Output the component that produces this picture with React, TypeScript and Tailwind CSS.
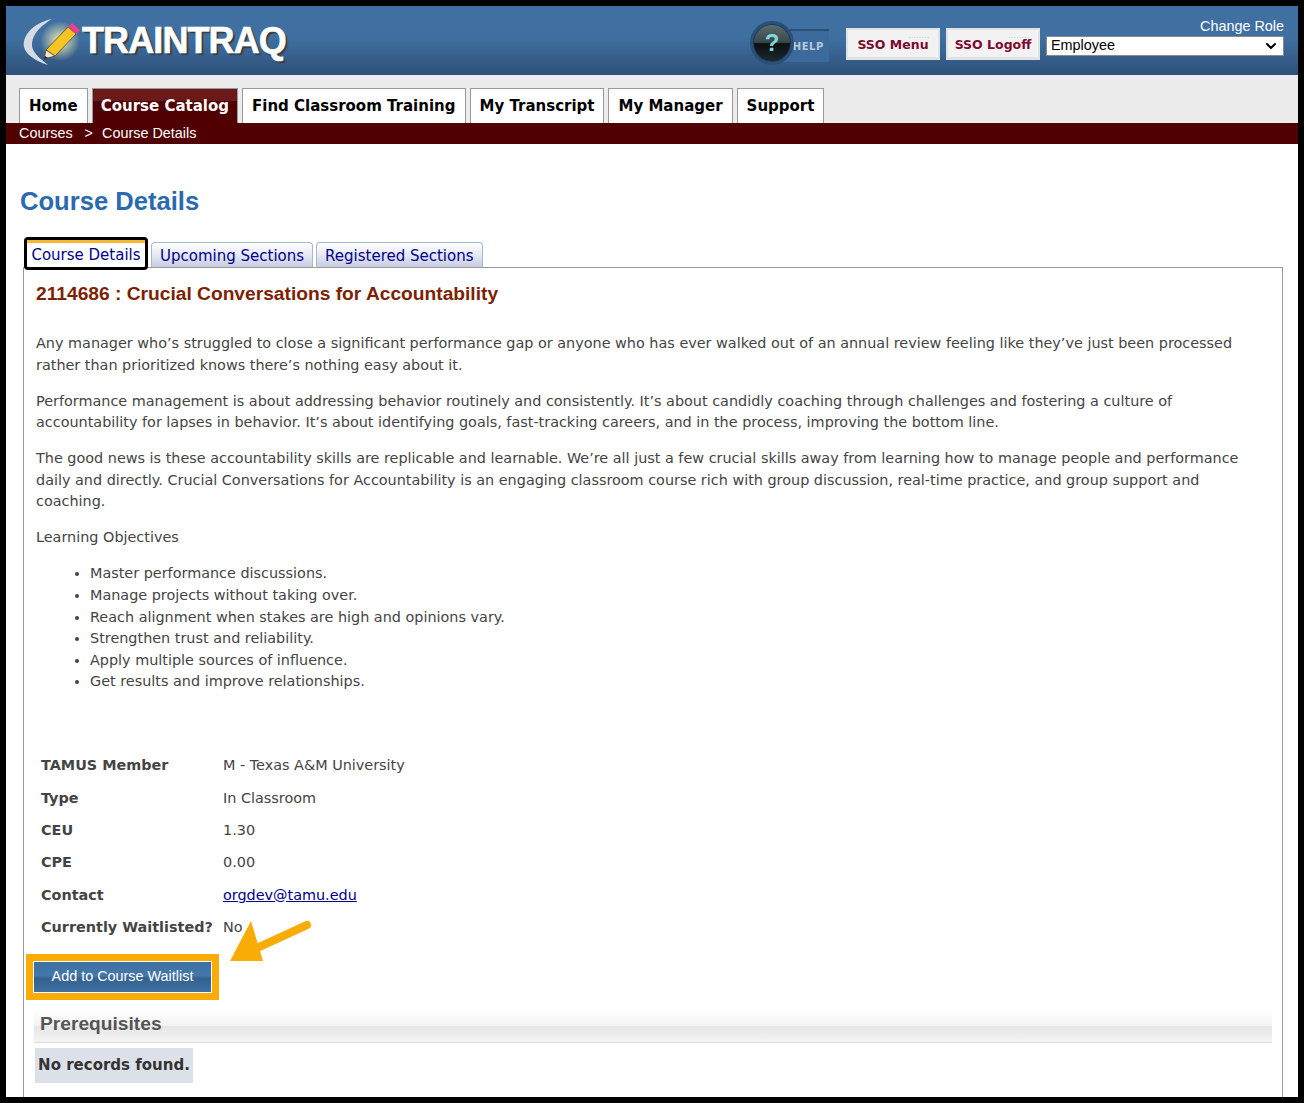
import React from 'react';
import { ChevronDown } from 'lucide-react';

const navItems = ['Home', 'Course Catalog', 'Find Classroom Training', 'My Transcript', 'My Manager', 'Support'];

const details = [
    { label: 'TAMUS Member', value: 'M - Texas A&M University' },
    { label: 'Type', value: 'In Classroom' },
    { label: 'CEU', value: '1.30' },
    { label: 'CPE', value: '0.00' },
    { label: 'Contact', value: 'orgdev@tamu.edu', link: true },
    { label: 'Currently Waitlisted?', value: 'No' },
];

const objectives = [
    'Master performance discussions.',
    'Manage projects without taking over.',
    'Reach alignment when stakes are high and opinions vary.',
    'Strengthen trust and reliability.',
    'Apply multiple sources of influence.',
    'Get results and improve relationships.',
];

function Logo() {
    return (
        <div className="flex items-center h-full pl-[16px]">
            <svg width="62" height="56" viewBox="0 0 62 56" className="shrink-0 -mr-[2px]">
                <defs>
                    <radialGradient id="glow">
                        <stop offset="0%" stopColor="#fdf6b0" stopOpacity="0.95" />
                        <stop offset="100%" stopColor="#fdf6b0" stopOpacity="0" />
                    </radialGradient>
                </defs>
                <path d="M30 6 C10 10 0 24 2 34 C4 42 14 48 26 52 C16 44 9 38 10 30 C11 20 20 12 30 6 Z" fill="#d5dbe2" />
                <circle cx="38" cy="28" r="20" fill="url(#glow)" />
                <path d="M46 14 L54 21 L33 43 L24 37 Z" fill="#f6c522" stroke="#3a3a3a" strokeWidth="0.7" />
                <path d="M46 14 L50 10 L58 17 L54 21 Z" fill="#ec3f8c" />
                <path d="M24 37 L22 46 L33 43 Z" fill="#f3e3c2" stroke="#3a3a3a" strokeWidth="0.7" />
                <path d="M23 43 L22 46 L26 45 Z" fill="#222" />
            </svg>
            <span className="font-['Liberation_Sans',sans-serif] font-bold text-[36px] leading-none tracking-[-0.9px] text-white [text-shadow:2px_2px_1px_#3b3b3b] [-webkit-text-stroke:0.6px_white]">
                TRAINTRAQ
            </span>
        </div>
    );
}

function HelpButton() {
    return (
        <div className="relative w-[80px] h-[44px] flex items-center">
            <div className="absolute left-[18px] top-[8px] w-[61px] h-[33px] bg-[#3b6a9c] border-t-2 border-[#2c4f78] flex items-center justify-end pr-[5px]">
                <span className="font-['DejaVu_Sans',sans-serif] font-bold text-[10px] tracking-[0.6px] text-[#b9c9da]">HELP</span>
            </div>
            <div className="absolute left-0 top-0 w-[44px] h-[44px] rounded-full border-[3px] border-[#2b5078] bg-[#1f3d5e] p-[1px]">
                <div className="w-full h-full rounded-full bg-[linear-gradient(#5b6a6c_0%,#39474a_48%,#0b0f10_52%,#1c2a2c_100%)] flex items-center justify-center">
                    <span className="font-['Liberation_Sans',sans-serif] font-bold text-[24px] leading-none text-[#7fd8dc]">?</span>
                </div>
            </div>
        </div>
    );
}

function SsoButton({ label, width }: { label: string; width: string }) {
    return (
        <div className={`${width} relative h-[32px] bg-[#f2f2f2] border-2 border-[#dfe3e3] border-b-[3px] flex items-end justify-center pb-[4px]`}>
            <span className="absolute top-[3px] right-[8px] text-[6px] leading-none tracking-[1px] text-[#888] font-['Liberation_Sans',sans-serif]">........</span>
            <span className="font-['DejaVu_Sans',sans-serif] font-bold text-[12.5px] leading-[16px] text-[#7d0a2f] whitespace-nowrap">{label}</span>
        </div>
    );
}

export default function App() {
    return (
        <div className="h-[1103px] overflow-hidden border-[6px] border-black bg-white font-['DejaVu_Sans',sans-serif]">
            <header className="h-[69px] flex justify-between bg-[linear-gradient(#3f70a1_0%,#3f70a1_45%,#2f5078_100%)]">
                <Logo />
                <div className="flex items-start pr-[14px]">
                    <div className="mt-[15px] mr-[16px]"><HelpButton /></div>
                    <div className="mt-[22px] flex gap-[6px]">
                        <SsoButton label="SSO Menu" width="w-[94px]" />
                        <SsoButton label="SSO Logoff" width="w-[94px]" />
                    </div>
                    <div className="ml-[6px] w-[238px] mt-[12px] flex flex-col items-end">
                        <span className="font-['Liberation_Sans',sans-serif] text-[14.4px] leading-[17px] text-white">Change Role</span>
                        <div className="w-full h-[20px] mt-[1px] bg-white border border-[#8a8a8a] flex items-center justify-between pl-[4px] pr-[4px]">
                            <span className="font-['Liberation_Sans',sans-serif] text-[14.4px] text-black">Employee</span>
                            <ChevronDown size={16} strokeWidth={3} className="text-black" />
                        </div>
                    </div>
                </div>
            </header>

            <nav className="h-[48px] bg-[#ececec] flex items-end pl-[13px] gap-[4px]">
                {navItems.map((item) => (
                    <div
                        key={item}
                        className={
                            item === 'Course Catalog'
                                ? "h-[35px] px-[8px] flex items-center border border-b-0 border-[#999] bg-[linear-gradient(#6b1a1a_0%,#6b1a1a_35%,#500000_35%)] text-white font-bold text-[15px] whitespace-nowrap"
                                : "h-[35px] px-[9px] flex items-center border border-b-0 border-[#999] bg-white text-black font-bold text-[15px] whitespace-nowrap"
                        }
                    >
                        {item}
                    </div>
                ))}
            </nav>

            <div className="h-[21px] bg-[#500000] pl-[13px] flex items-center font-['Liberation_Sans',sans-serif] text-[14.4px] text-white whitespace-pre">
                Courses<span className="ml-[12px] mr-[9px]">&gt;</span>Course Details
            </div>

            <main className="px-[14px]">
                <h1 className="mt-[40px] font-['Liberation_Sans',sans-serif] font-bold text-[25.6px] leading-[34px] text-[#2a6ab0]">Course Details</h1>

                <div className="mt-[19px] ml-[4px] h-[33px] flex items-end gap-[3px] relative z-10 -mb-[3px]">
                    <div className="h-[33px] w-[124px] rounded-[4px] border-[3px] border-black bg-white">
                        <div className="h-[3px] bg-[#f7b733]"></div>
                        <div className="text-center text-[15px] leading-[24px] text-[#00008b] whitespace-nowrap">Course Details</div>
                    </div>
                    <div className="h-[25px] mb-[3px] px-[8px] rounded-t-[4px] border border-b-0 border-[#a9b8c6] bg-[linear-gradient(#ffffff_0%,#e6e8f4_50%,#c6cde0_100%)] text-[15px] leading-[26px] text-[#00008b] whitespace-nowrap">Upcoming Sections</div>
                    <div className="h-[25px] mb-[3px] px-[8px] rounded-t-[4px] border border-b-0 border-[#a9b8c6] bg-[linear-gradient(#ffffff_0%,#e6e8f4_50%,#c6cde0_100%)] text-[15px] leading-[26px] text-[#00008b] whitespace-nowrap">Registered Sections</div>
                </div>

                <section className="ml-[3px] mr-[1px] border border-[#999] border-b-0 h-[900px] px-[12px] text-[14.4px] leading-[21.6px] text-[#444]">
                    <h2 className="mt-[13px] font-['Liberation_Sans',sans-serif] font-bold text-[19.2px] leading-[26px] text-[#7d2200]">2114686 : Crucial Conversations for Accountability</h2>

                    <p className="mt-[26px]">Any manager who’s struggled to close a significant performance gap or anyone who has ever walked out of an annual review feeling like they’ve just been processed rather than prioritized knows there’s nothing easy about it.</p>
                    <p className="mt-[14.4px]">Performance management is about addressing behavior routinely and consistently. It’s about candidly coaching through challenges and fostering a culture of accountability for lapses in behavior. It’s about identifying goals, fast-tracking careers, and in the process, improving the bottom line.</p>
                    <p className="mt-[14.4px]">The good news is these accountability skills are replicable and learnable. We’re all just a few crucial skills away from learning how to manage people and performance daily and directly. Crucial Conversations for Accountability is an engaging classroom course rich with group discussion, real-time practice, and group support and coaching.</p>
                    <p className="mt-[14.4px]">Learning Objectives</p>
                    <ul className="mt-[14.4px] pl-[54px] list-disc">
                        {objectives.map((o) => <li key={o}>{o}</li>)}
                    </ul>

                    <div className="mt-[57px] ml-[5px] grid grid-cols-[182px_1fr] auto-rows-[32.4px] items-center">
                        {details.map((d) => (
                            <React.Fragment key={d.label}>
                                <div className="font-bold whitespace-nowrap">{d.label}</div>
                                <div>{d.link ? <a className="text-[#00008b] underline" href="#">{d.value}</a> : d.value}</div>
                            </React.Fragment>
                        ))}
                    </div>

                    <div className="relative mt-[10px] -ml-[10px] w-[193px] h-[46px] bg-[#f9ab06] flex items-center justify-center">
                        <button className="w-[179px] h-[32px] border border-white bg-[linear-gradient(#3f70a1_0%,#4478ab_45%,#34628f_55%,#3f70a1_100%)] font-['Liberation_Sans',sans-serif] text-[14.4px] text-white">
                            Add to Course Waitlist
                        </button>
                        <svg width="84" height="46" viewBox="0 0 84 46" className="absolute left-[204px] -top-[34px]">
                            <path d="M77 5 L27 28" stroke="#f9ab06" strokeWidth="8" strokeLinecap="round" fill="none" />
                            <path d="M0 41 L21 1 L33 41 Z" fill="#f9ab06" />
                        </svg>
                    </div>

                    <div className="mt-[9px] -mx-[2px] h-[34px] border-b border-[#ddd] bg-[linear-gradient(#ffffff_0%,#f3f3f3_50%,#e6e6e6_52%,#f4f4f4_100%)] pl-[6px] font-['Liberation_Sans',sans-serif] font-bold text-[19.2px] leading-[30px] text-[#555]">
                        Prerequisites
                    </div>
                    <div className="mt-[5px] -ml-[1px] w-[158px] h-[35px] bg-[#dce1e9] flex items-center justify-center font-bold text-[15px] text-[#333] whitespace-nowrap">
                        No records found.
                    </div>
                </section>
            </main>
        </div>
    );
}
